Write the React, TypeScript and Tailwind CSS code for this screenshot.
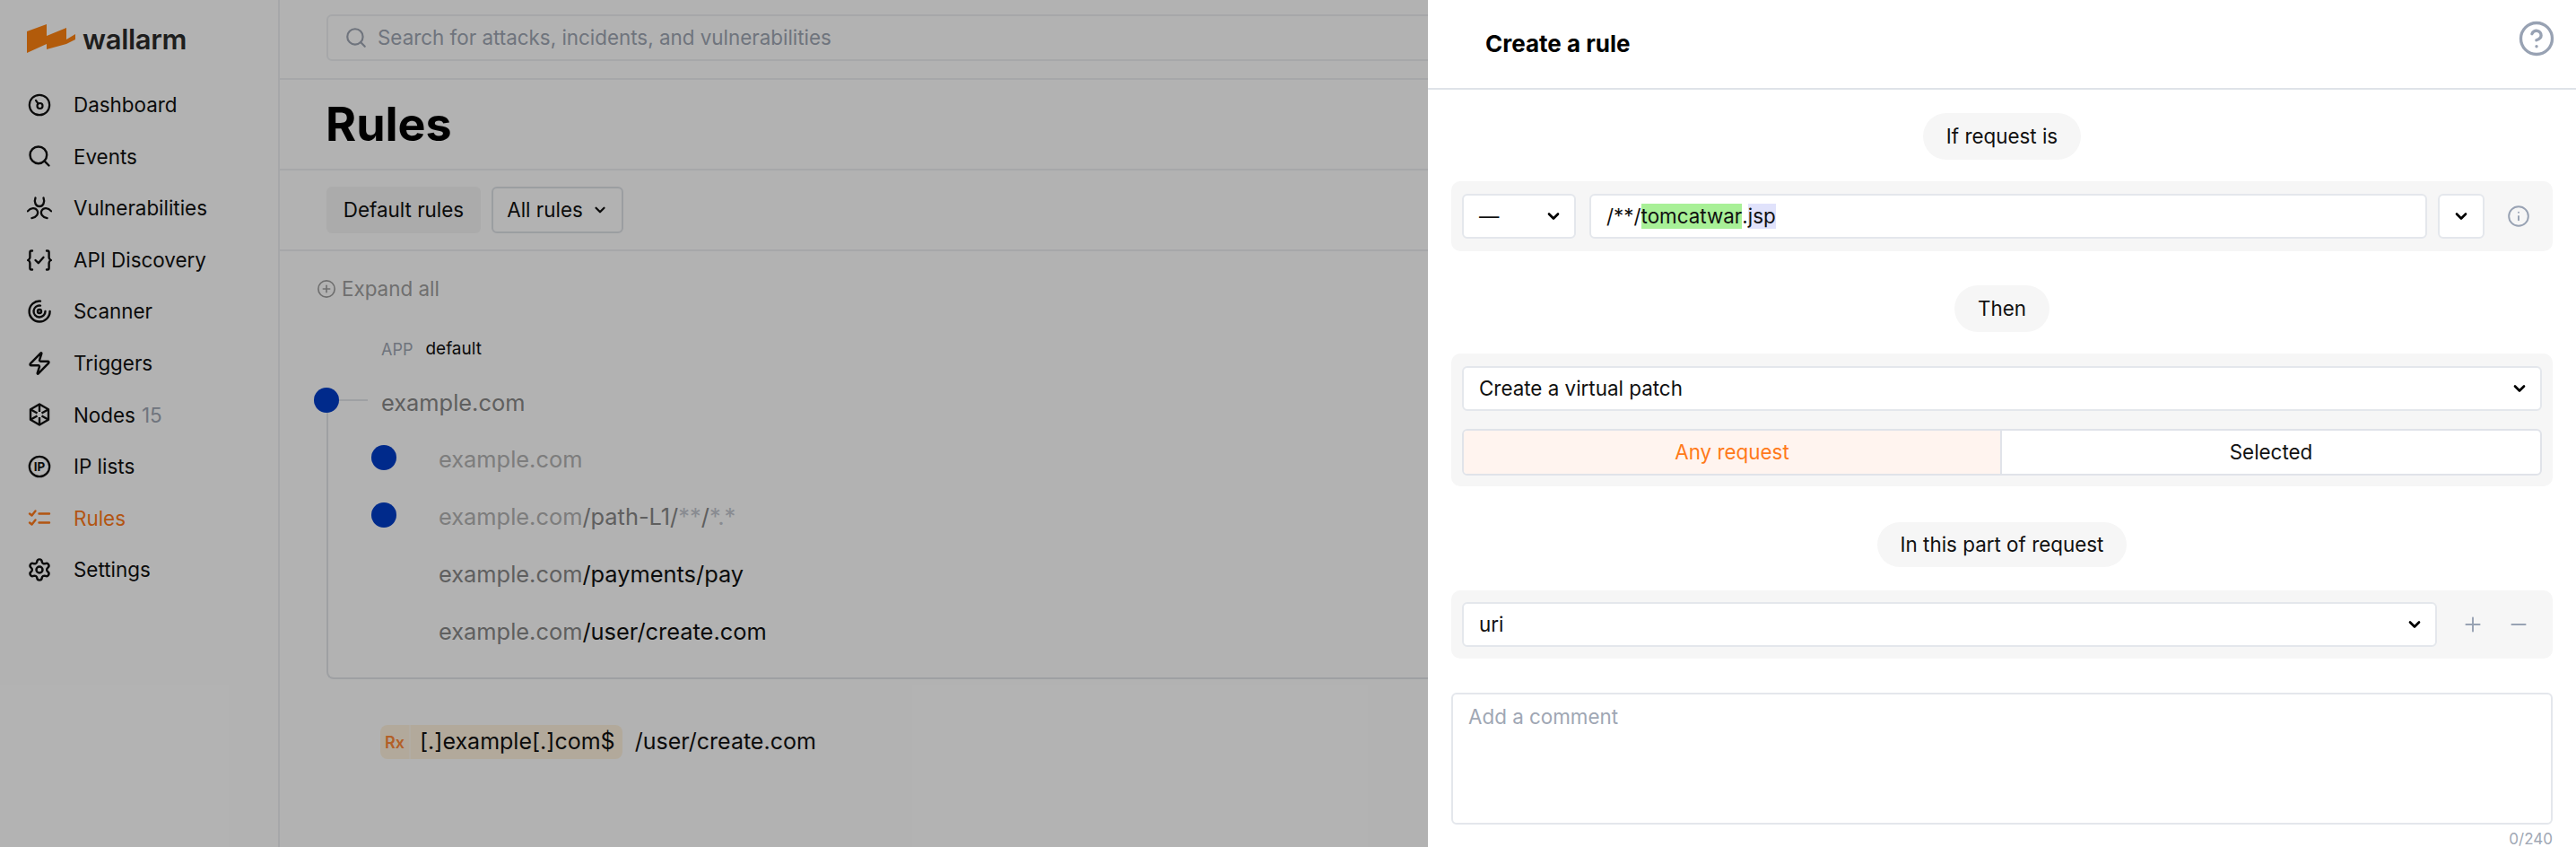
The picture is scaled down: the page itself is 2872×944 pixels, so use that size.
import React from 'react';
import { ChevronDown, Search, Zap, Settings, Plus, Minus, CirclePlus, Info, CircleHelp } from 'lucide-react';

const font = { fontFamily: 'Inter, "Liberation Sans", sans-serif' };

function DashboardIcon() {
  return (
    <svg width="28" height="28" viewBox="0 0 28 28" fill="none" stroke="currentColor" strokeWidth="2.2" strokeLinecap="round">
      <circle cx="14" cy="14" r="11.2" />
      <circle cx="14.5" cy="15" r="3" />
      <path d="M12.6 12.6 10 8.8" />
    </svg>
  );
}

function BiohazardIcon() {
  const arc = 'M9.5 2.5C7.6 7.5 10 12 14 12C18 12 20.4 7.5 18.5 2.5';
  return (
    <svg width="28" height="28" viewBox="0 0 28 28" fill="none" stroke="currentColor" strokeWidth="2.3" strokeLinecap="round">
      <path d={arc} />
      <path d={arc} transform="rotate(120 14 15)" />
      <path d={arc} transform="rotate(240 14 15)" />
    </svg>
  );
}

function ApiIcon() {
  return (
    <svg width="28" height="28" viewBox="0 0 28 28" fill="none" stroke="currentColor" strokeWidth="2.4" strokeLinecap="round" strokeLinejoin="round">
      <path d="M6 3.5H5C3.9 3.5 3.4 4.2 3.4 5.2V11C3.4 12.4 2.6 13.4 1.2 14 2.6 14.6 3.4 15.6 3.4 17V22.8C3.4 23.8 3.9 24.5 5 24.5H6" />
      <path d="M22 3.5H23C24.1 3.5 24.6 4.2 24.6 5.2V11C24.6 12.4 25.4 13.4 26.8 14 25.4 14.6 24.6 15.6 24.6 17V22.8C24.6 23.8 24.1 24.5 23 24.5H22" />
      <path d="M9.5 14 12.8 17.2 18.5 10.8" />
    </svg>
  );
}

function ScannerIcon() {
  return (
    <svg width="28" height="28" viewBox="0 0 28 28" fill="none" stroke="currentColor" strokeWidth="2.4" strokeLinecap="round">
      <path d="M15 2.6A11.5 11.5 0 1 0 25.6 14" />
      <path d="M15 7.6A6.5 6.5 0 1 0 20.5 14" />
      <circle cx="14" cy="14" r="2" />
    </svg>
  );
}

function NodesIcon() {
  return (
    <svg width="28" height="28" viewBox="0 0 28 28" fill="none" stroke="currentColor" strokeWidth="2.4" strokeLinejoin="round">
      <path d="M14 2.5 24 8.2V19.8L14 25.5 4 19.8V8.2Z" />
      <path d="M14 2.5V11M14 17V25.5M4 8.2 11.5 12.5M16.5 15.5 24 19.8M24 8.2 16.5 12.5M11.5 15.5 4 19.8" />
    </svg>
  );
}

function IpIcon() {
  return (
    <svg width="28" height="28" viewBox="0 0 28 28" fill="none">
      <circle cx="14" cy="14" r="11.2" stroke="currentColor" strokeWidth="2.3" />
      <text x="14" y="19" textAnchor="middle" fontSize="13.5" fontWeight="700" fill="currentColor" style={font}>IP</text>
    </svg>
  );
}

function RulesIcon() {
  return (
    <svg width="28" height="28" viewBox="0 0 28 28" fill="none" stroke="currentColor" strokeWidth="2.4" strokeLinecap="round" strokeLinejoin="round">
      <path d="M3 8.5 5.5 10.5 9.5 5.5M3 18.5 5.5 20.5 9.5 15.5" />
      <path d="M13.5 8.5H25M13.5 18.5H25" />
    </svg>
  );
}

function Logo() {
  return (
    <svg width="54" height="32" viewBox="0 0 54 32" className="shrink-0">
      <path fill="#ff8311" d="M0 8 22 0V13L44 4V17L54 11V17L44 22 22 28V22L0 32Z" />
    </svg>
  );
}

const navItems = [
  { label: 'Dashboard', icon: <DashboardIcon /> },
  { label: 'Events', icon: <Search size={28} strokeWidth={2.1} /> },
  { label: 'Vulnerabilities', icon: <BiohazardIcon /> },
  { label: 'API Discovery', icon: <ApiIcon /> },
  { label: 'Scanner', icon: <ScannerIcon /> },
  { label: 'Triggers', icon: <Zap size={28} strokeWidth={2.1} /> },
  { label: 'Nodes', count: '15', icon: <NodesIcon /> },
  { label: 'IP lists', icon: <IpIcon /> },
  { label: 'Rules', active: true, icon: <RulesIcon /> },
  { label: 'Settings', icon: <Settings size={28} strokeWidth={2.1} /> },
];

function Sidebar() {
  return (
    <aside className="w-[312px] shrink-0 border-r-2 border-[#eef0f3] pl-[30px] pt-[27px]">
      <div className="flex items-center gap-[8px] h-[32px]">
        <Logo />
        <span className="text-[31px] font-semibold tracking-[-0.3px] text-[#2c2c2c] leading-none">wallarm</span>
      </div>
      <nav className="mt-[29px] flex flex-col">
        {navItems.map((item) => (
          <div key={item.label} className={`flex items-center h-[57.6px] ${item.active ? 'text-[#ff7a1a]' : 'text-[#111]'}`}>
            <span className="w-[28px] h-[28px] flex items-center justify-center shrink-0">{item.icon}</span>
            <span className="ml-[24px] text-[22.4px]">
              {item.label}
              {item.count && <span className="text-[#a0a7b4] ml-[7px]">{item.count}</span>}
            </span>
          </div>
        ))}
      </nav>
    </aside>
  );
}

function Dot() {
  return <span className="w-[28px] h-[28px] rounded-full bg-[#003dc8] shrink-0" />;
}

function RuleRow({ dot, children }: { dot?: boolean; children: React.ReactNode }) {
  return (
    <div className="flex items-center h-[64px] pl-[48px]">
      <span className="w-[28px] shrink-0 flex">{dot && <Dot />}</span>
      <span className="ml-[47px] mt-[4px] text-[25.4px] text-[#111] whitespace-nowrap">{children}</span>
    </div>
  );
}

function MainContent() {
  return (
    <main className="flex-1 min-w-0">
      <div className="h-[89px] border-b-2 border-[#eef0f3] pl-[52px] pt-[16px]">
        <div className="h-[52px] border-2 border-[#eef0f3] rounded-[6px] flex items-center pl-[18px]">
          <Search size={26} strokeWidth={2} className="text-[#a0a7b4]" />
          <span className="ml-[11px] text-[22.4px] text-[#a0a7b4]">Search for attacks, incidents, and vulnerabilities</span>
        </div>
      </div>
      <div className="h-[101px] border-b-2 border-[#eef0f3] pl-[51px] flex items-center">
        <h1 className="text-[52px] font-bold text-black leading-none">Rules</h1>
      </div>
      <div className="h-[90px] border-b-2 border-[#eef0f3] pl-[52px] pt-[18px] flex items-start gap-[12px]">
        <div className="h-[52px] w-[172px] rounded-[6px] bg-[#f5f5f5] flex items-center justify-center text-[22.4px] text-[#111]">Default rules</div>
        <div className="h-[52px] w-[147px] rounded-[6px] border-2 border-[#dfe2e7] flex items-center justify-center gap-[10px] text-[22.4px] text-[#111]">
          All rules
          <ChevronDown size={18} strokeWidth={3} />
        </div>
      </div>
      <div className="pl-[41px] mt-[30px] flex items-center h-[24px] text-[22.4px] text-[#a0a0a0]">
        <CirclePlus size={22} strokeWidth={1.8} />
        <span className="ml-[6px]">Expand all</span>
      </div>
      <div className="pl-[113px] mt-[43px] h-[24px] flex items-center gap-[14px]">
        <span className="text-[18px] text-[#a0a7b4]">APP</span>
        <span className="text-[19px] text-[#111]">default</span>
      </div>
      <div className="pl-[38px] mt-[27px]">
        <div className="flex items-center h-[36px]">
          <Dot />
          <span className="w-[32px] h-[2px] bg-[#e3e6ea]" />
          <span className="ml-[15px] mt-[6px] text-[25.4px] text-[#888]">example.com</span>
        </div>
        <div className="ml-[14px] border-l-2 border-b-2 border-[#e3e6ea] rounded-bl-[8px] h-[303px] mt-[-10px] pt-[24px]">
          <RuleRow dot><span className="text-[#b3b3b3]">example.com</span></RuleRow>
          <RuleRow dot>
            <span className="text-[#b3b3b3]">example.com</span>
            <span className="text-[#888]">/path-L1/</span>
            <span className="text-[#c4c8d0]">**</span>
            <span className="text-[#888]">/</span>
            <span className="text-[#c4c8d0]">*.*</span>
          </RuleRow>
          <RuleRow><span className="text-[#888]">example.com</span>/payments/pay</RuleRow>
          <RuleRow><span className="text-[#888]">example.com</span>/user/create.com</RuleRow>
        </div>
      </div>
      <div className="ml-[112px] mt-[51px] flex items-center text-[25px] text-[#111]">
        <div className="h-[38px] rounded-[8px] bg-[#fff3df] flex items-center overflow-hidden">
          <span className="w-[34px] h-full flex items-center justify-center text-[18px] font-semibold text-[#ff8a3a] border-r-2 border-[#fff6ea]">Rx</span>
          <span className="pl-[10px] pr-[8px]">[.]example[.]com$</span>
        </div>
        <span className="ml-[14px]">/user/create.com</span>
      </div>
    </main>
  );
}

function Pill({ short, children }: { short?: boolean; children: React.ReactNode }) {
  return (
    <div className="flex justify-center">
      <div className={`${short ? 'h-[50px]' : 'h-[52px]'} px-[26px] rounded-full bg-[#f6f6f6] flex items-center text-[22.4px] text-[#111]`}>{children}</div>
    </div>
  );
}

function Select({ className, children }: { className?: string; children?: React.ReactNode }) {
  return (
    <div className={`h-[50px] bg-white border-2 border-[#e4e7ec] rounded-[6px] flex items-center justify-between pl-[17px] pr-[13px] text-[22.4px] text-[#111] ${className ?? ''}`}>
      <span>{children}</span>
      <ChevronDown size={20} strokeWidth={3.2} className="text-black" />
    </div>
  );
}

function RulePanel() {
  return (
    <section className="absolute right-0 top-0 h-[944px] w-[1280px] bg-white overflow-hidden">
      <header className="h-[100px] border-b-2 border-[#dfe3e8] flex items-start justify-between pl-[64px] pr-[23px]">
        <h2 className="text-[26px] font-bold text-black mt-[29px]">Create a rule</h2>
        <CircleHelp size={42} strokeWidth={1.9} className="text-[#98a2b3] mt-[22px]" />
      </header>
      <div className="px-[26px] pt-[26px]">
        <Pill>If request is</Pill>
        <div className="mt-[24px] h-[78px] rounded-[10px] bg-[#f6f6f6] pl-[12px] flex items-center">
          <Select className="w-[127px]">—</Select>
          <div className="ml-[15px] w-[934px] h-[50px] bg-white border-2 border-[#e4e7ec] rounded-[6px] flex items-center pl-[17px] text-[22.4px] text-[#111]">
            <span>/**/</span>
            <span className="bg-[#a8f097] leading-[28px]">tomcatwar</span>
            <span>.</span>
            <span className="bg-[#e0e2fb] leading-[28px]">jsp</span>
          </div>
          <div className="ml-[12px] w-[52px] h-[50px] bg-white border-2 border-[#e4e7ec] rounded-[6px] flex items-center justify-center">
            <ChevronDown size={20} strokeWidth={3.2} className="text-black" />
          </div>
          <Info size={26} strokeWidth={1.8} className="text-[#98a2b3] ml-[25px]" />
        </div>
        <div className="mt-[38px]"><Pill>Then</Pill></div>
        <div className="mt-[24px] h-[148px] rounded-[10px] bg-[#f6f6f6] px-[12px] pt-[14px]">
          <Select>Create a virtual patch</Select>
          <div className="mt-[20px] h-[52px] flex border-2 border-[#e0e3e9] rounded-[6px] bg-white text-[22.4px] overflow-hidden">
            <div className="w-[600px] bg-[#fff4ef] text-[#ff7a1a] flex items-center justify-center border-r-2 border-[#e0e3e9]">Any request</div>
            <div className="flex-1 text-[#111] flex items-center justify-center">Selected</div>
          </div>
        </div>
        <div className="mt-[40px]"><Pill short>In this part of request</Pill></div>
        <div className="mt-[26px] h-[76px] rounded-[10px] bg-[#f6f6f6] pl-[12px] flex items-center">
          <Select className="w-[1087px]">uri</Select>
          <Plus size={26} strokeWidth={1.8} className="text-[#98a2b3] ml-[27px]" />
          <Minus size={26} strokeWidth={1.8} className="text-[#98a2b3] ml-[25px]" />
        </div>
        <div className="mt-[38px] h-[147px] border-2 border-[#e4e7ec] rounded-[6px] pl-[17px] pt-[8px] text-[22.4px] text-[#a0a7b4]">Add a comment</div>
        <div className="mt-[8px] text-right text-[17px] leading-none text-[#a0a7b4]">0/240</div>
      </div>
    </section>
  );
}

export default function App() {
  return (
    <div className="relative flex h-[944px] w-[2872px] overflow-hidden bg-white" style={font}>
      <Sidebar />
      <MainContent />
      <div className="absolute inset-0 bg-black/30" />
      <RulePanel />
    </div>
  );
}
